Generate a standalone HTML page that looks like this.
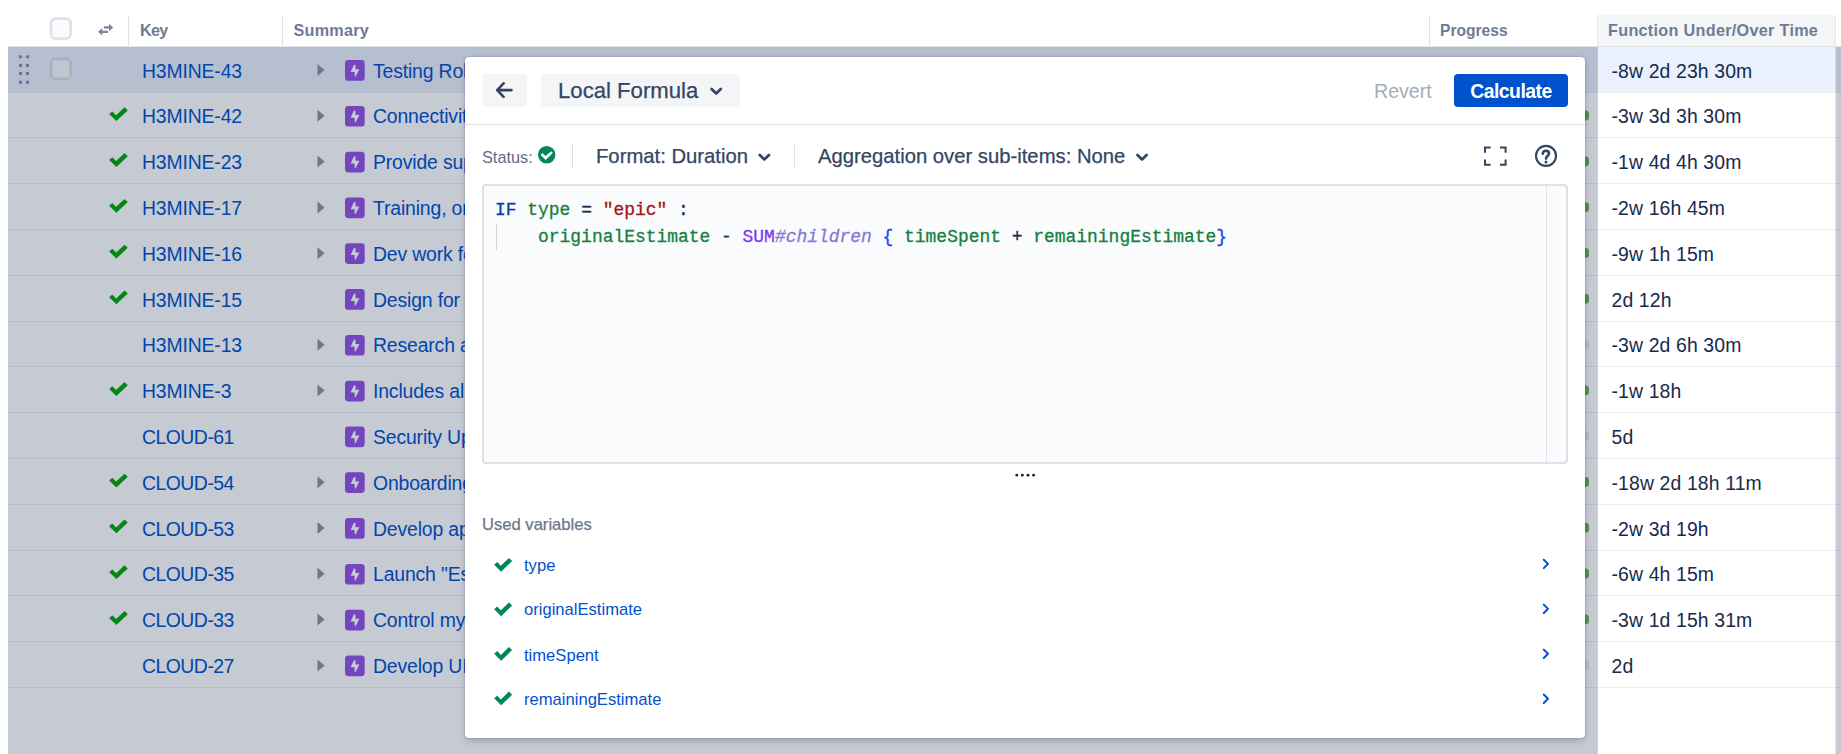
<!DOCTYPE html>
<html lang="en"><head><meta charset="utf-8"><title>Structure - Local Formula</title>
<style>
*{box-sizing:border-box}
html,body{margin:0;padding:0}
body{width:1841px;height:754px;overflow:hidden;background:#fff;position:relative;font-family:"Liberation Sans",sans-serif;color:#172b4d}
.abs{position:absolute}
.layer{position:absolute;left:0;top:0;width:1841px;height:754px;pointer-events:none}
.hd{position:absolute;top:15px;height:31px;line-height:31px;font-weight:bold;font-size:15.6px;color:#6e7b94;white-space:nowrap}
.vsep{position:absolute;top:15px;height:31px;width:1px;background:#dfe1e6}
.row{position:absolute;left:8px;width:1833px;border-bottom:1px solid #ecedf1}
.row.sel{background:#ebf1fc}
.tx{position:absolute;font-size:19.4px;line-height:20px;white-space:nowrap}
.key{left:142px;color:#0052cc;letter-spacing:-0.15px}
.sum{left:373px;color:#0052cc;letter-spacing:-0.15px}
.val{left:1611.5px;color:#172b4d;letter-spacing:0.13px}
.ov{position:absolute;background:rgba(9,30,66,0.235)}
.dlg{position:absolute;left:465px;top:57px;width:1120px;height:681px;background:#fff;border-radius:4px;box-shadow:0 4px 8px -2px rgba(9,30,66,.25),0 0 1px rgba(9,30,66,.31),0 0 3px rgba(9,30,66,.18)}
.btn{position:absolute;top:17px;height:33px;border-radius:4px;background:#f4f5f7}
.t{position:absolute;white-space:nowrap}
.code{position:absolute;left:30px;font-family:"Liberation Mono",monospace;font-size:17.95px;white-space:pre;line-height:27px;-webkit-text-stroke:0.3px}
.var{position:absolute;left:59px;color:#0052cc;font-size:16.6px;line-height:24px;white-space:nowrap}
.kw{color:#0b3ea8}.id{color:#15803d}.op{color:#172b4d}.st{color:#a31515}.fn{color:#7c3aed}.mod{color:#8777d9;font-style:italic}.br{color:#1e40f5}
</style></head><body>

<div class="vsep" style="left:128px"></div>
<div class="vsep" style="left:282px"></div>
<div class="vsep" style="left:1429px"></div>
<div class="hd" style="left:140px;font-size:16.2px;letter-spacing:-0.7px">Key</div>
<div class="hd" style="left:293.5px;font-size:16.2px;letter-spacing:0.25px">Summary</div>
<div class="hd" style="left:1440px">Progress</div>
<div class="abs" style="left:1597px;top:15px;width:239px;height:32px;background:#f4f5f7;border-left:1px solid #e6e7eb;border-right:1px solid #e6e7eb;border-bottom:1px solid #dfe1e6"></div>
<div class="hd" style="left:1608px;font-size:16.2px;letter-spacing:0.3px">Function Under/Over Time</div>
<div class="row sel" style="top:47px;height:46px"></div>
<div class="row" style="top:93px;height:45px"></div>
<div class="row" style="top:138px;height:46px"></div>
<div class="row" style="top:184px;height:46px"></div>
<div class="row" style="top:230px;height:46px"></div>
<div class="row" style="top:276px;height:46px"></div>
<div class="row" style="top:322px;height:45px"></div>
<div class="row" style="top:367px;height:46px"></div>
<div class="row" style="top:413px;height:46px"></div>
<div class="row" style="top:459px;height:46px"></div>
<div class="row" style="top:505px;height:46px"></div>
<div class="row" style="top:551px;height:45px"></div>
<div class="row" style="top:596px;height:46px"></div>
<div class="row" style="top:642px;height:46px"></div>
<span class="tx key" style="top:61px">H3MINE-43</span>
<span class="tx sum" style="top:61px">Testing Rol</span>
<span class="tx val" style="top:61px">-8w 2d 23h 30m</span>
<span class="tx key" style="top:106px">H3MINE-42</span>
<span class="tx sum" style="top:106px">Connectivit</span>
<span class="tx val" style="top:106px">-3w 3d 3h 30m</span>
<span class="tx key" style="top:152px">H3MINE-23</span>
<span class="tx sum" style="top:152px">Provide sup</span>
<span class="tx val" style="top:152px">-1w 4d 4h 30m</span>
<span class="tx key" style="top:198px">H3MINE-17</span>
<span class="tx sum" style="top:198px">Training, on</span>
<span class="tx val" style="top:198px">-2w 16h 45m</span>
<span class="tx key" style="top:244px">H3MINE-16</span>
<span class="tx sum" style="top:244px">Dev work fo</span>
<span class="tx val" style="top:244px">-9w 1h 15m</span>
<span class="tx key" style="top:290px">H3MINE-15</span>
<span class="tx sum" style="top:290px">Design for </span>
<span class="tx val" style="top:290px">2d 12h</span>
<span class="tx key" style="top:335px">H3MINE-13</span>
<span class="tx sum" style="top:335px">Research an</span>
<span class="tx val" style="top:335px">-3w 2d 6h 30m</span>
<span class="tx key" style="top:381px">H3MINE-3</span>
<span class="tx sum" style="top:381px">Includes all</span>
<span class="tx val" style="top:381px">-1w 18h</span>
<span class="tx key" style="top:427px;letter-spacing:-0.5px">CLOUD-61</span>
<span class="tx sum" style="top:427px">Security Up</span>
<span class="tx val" style="top:427px">5d</span>
<span class="tx key" style="top:473px;letter-spacing:-0.5px">CLOUD-54</span>
<span class="tx sum" style="top:473px">Onboarding</span>
<span class="tx val" style="top:473px">-18w 2d 18h 11m</span>
<span class="tx key" style="top:519px;letter-spacing:-0.5px">CLOUD-53</span>
<span class="tx sum" style="top:519px">Develop app</span>
<span class="tx val" style="top:519px">-2w 3d 19h</span>
<span class="tx key" style="top:564px;letter-spacing:-0.5px">CLOUD-35</span>
<span class="tx sum" style="top:564px">Launch &quot;Ess</span>
<span class="tx val" style="top:564px">-6w 4h 15m</span>
<span class="tx key" style="top:610px;letter-spacing:-0.5px">CLOUD-33</span>
<span class="tx sum" style="top:610px">Control my </span>
<span class="tx val" style="top:610px">-3w 1d 15h 31m</span>
<span class="tx key" style="top:656px;letter-spacing:-0.5px">CLOUD-27</span>
<span class="tx sum" style="top:656px">Develop UI</span>
<span class="tx val" style="top:656px">2d</span>
<svg class="layer" width="1841" height="754" viewBox="0 0 1841 754"><rect x="51" y="18.6" width="19.6" height="20" rx="4.6" fill="#fafbfc" stroke="#dfe1e8" stroke-width="2.7"/><rect x="51" y="58.8" width="19.6" height="20" rx="4.6" fill="#fafbfc" stroke="#dcdee5" stroke-width="2.7"/><path transform="translate(98 23)" d="M5.9 3.2H11V0.7L15.2 4.5 11 8.2V5.6H5.9zM9.9 7.7H4.2V5L0.1 8.8 4.2 12.6V10.1H9.9z" fill="#7a869a"/><g fill="#8993a4"><rect x="18.9" y="55.3" width="3.2" height="3"/><rect x="25.9" y="55.3" width="3.2" height="3"/><rect x="18.9" y="64" width="3.2" height="3"/><rect x="25.9" y="64" width="3.2" height="3"/><rect x="18.9" y="72" width="3.2" height="3"/><rect x="25.9" y="72" width="3.2" height="3"/><rect x="18.9" y="80.8" width="3.2" height="3"/><rect x="25.9" y="80.8" width="3.2" height="3"/></g><path d="M317.5 64L324.6 70L317.5 76z" fill="#8993a4"/><g transform="translate(345 60.1)"><rect width="19.7" height="20.7" rx="3.4" fill="#9652e2"/><path d="M10.400 4.500L8.800 4.900 5.600 11.800H9.500L9.800 16.500H10.600L14.400 9.100H10.600z" fill="#fff"/></g><rect x="1579.2" y="64.8" width="9.8" height="9.8" rx="3.4" fill="#ebecf0"/><path transform="translate(108 106)" d="M1.1 8.1L4.3 5.4 8.1 9.2 16.5 1.3 19.8 4.4 8.4 15.1z" fill="#08a706"/><path d="M317.5 109.8L324.6 115.8L317.5 121.8z" fill="#8993a4"/><g transform="translate(345 105.9)"><rect width="19.7" height="20.7" rx="3.4" fill="#9652e2"/><path d="M10.400 4.500L8.800 4.900 5.600 11.800H9.500L9.800 16.500H10.600L14.400 9.100H10.600z" fill="#fff"/></g><rect x="1579.2" y="110.6" width="9.8" height="9.8" rx="3.4" fill="#6db549"/><path transform="translate(108 151.8)" d="M1.1 8.1L4.3 5.4 8.1 9.2 16.5 1.3 19.8 4.4 8.4 15.1z" fill="#08a706"/><path d="M317.5 155.6L324.6 161.6L317.5 167.6z" fill="#8993a4"/><g transform="translate(345 151.7)"><rect width="19.7" height="20.7" rx="3.4" fill="#9652e2"/><path d="M10.400 4.500L8.800 4.900 5.600 11.800H9.500L9.800 16.500H10.600L14.400 9.100H10.600z" fill="#fff"/></g><rect x="1579.2" y="156.4" width="9.8" height="9.8" rx="3.4" fill="#6db549"/><path transform="translate(108 197.6)" d="M1.1 8.1L4.3 5.4 8.1 9.2 16.5 1.3 19.8 4.4 8.4 15.1z" fill="#08a706"/><path d="M317.5 201.4L324.6 207.4L317.5 213.4z" fill="#8993a4"/><g transform="translate(345 197.5)"><rect width="19.7" height="20.7" rx="3.4" fill="#9652e2"/><path d="M10.400 4.500L8.800 4.900 5.600 11.800H9.500L9.800 16.500H10.600L14.400 9.100H10.600z" fill="#fff"/></g><rect x="1579.2" y="202.2" width="9.8" height="9.8" rx="3.4" fill="#6db549"/><path transform="translate(108 243.4)" d="M1.1 8.1L4.3 5.4 8.1 9.2 16.5 1.3 19.8 4.4 8.4 15.1z" fill="#08a706"/><path d="M317.5 247.2L324.6 253.2L317.5 259.2z" fill="#8993a4"/><g transform="translate(345 243.3)"><rect width="19.7" height="20.7" rx="3.4" fill="#9652e2"/><path d="M10.400 4.500L8.800 4.900 5.600 11.800H9.500L9.800 16.500H10.600L14.400 9.100H10.600z" fill="#fff"/></g><rect x="1579.2" y="248" width="9.8" height="9.8" rx="3.4" fill="#6db549"/><path transform="translate(108 289.2)" d="M1.1 8.1L4.3 5.4 8.1 9.2 16.5 1.3 19.8 4.4 8.4 15.1z" fill="#08a706"/><g transform="translate(345 289.1)"><rect width="19.7" height="20.7" rx="3.4" fill="#9652e2"/><path d="M10.400 4.500L8.800 4.900 5.600 11.800H9.500L9.800 16.500H10.600L14.400 9.100H10.600z" fill="#fff"/></g><rect x="1579.2" y="293.8" width="9.8" height="9.8" rx="3.4" fill="#6db549"/><path d="M317.5 338.8L324.6 344.8L317.5 350.8z" fill="#8993a4"/><g transform="translate(345 334.9)"><rect width="19.7" height="20.7" rx="3.4" fill="#9652e2"/><path d="M10.400 4.500L8.800 4.900 5.600 11.800H9.500L9.800 16.500H10.600L14.400 9.100H10.600z" fill="#fff"/></g><rect x="1579.2" y="339.6" width="9.8" height="9.8" rx="3.4" fill="#ebecf0"/><path transform="translate(108 380.8)" d="M1.1 8.1L4.3 5.4 8.1 9.2 16.5 1.3 19.8 4.4 8.4 15.1z" fill="#08a706"/><path d="M317.5 384.6L324.6 390.6L317.5 396.6z" fill="#8993a4"/><g transform="translate(345 380.7)"><rect width="19.7" height="20.7" rx="3.4" fill="#9652e2"/><path d="M10.400 4.500L8.800 4.900 5.600 11.800H9.500L9.800 16.500H10.600L14.400 9.100H10.600z" fill="#fff"/></g><rect x="1579.2" y="385.4" width="9.8" height="9.8" rx="3.4" fill="#6db549"/><g transform="translate(345 426.5)"><rect width="19.7" height="20.7" rx="3.4" fill="#9652e2"/><path d="M10.400 4.500L8.800 4.900 5.600 11.800H9.500L9.800 16.500H10.600L14.400 9.100H10.600z" fill="#fff"/></g><rect x="1579.2" y="431.2" width="9.8" height="9.8" rx="3.4" fill="#ebecf0"/><path transform="translate(108 472.4)" d="M1.1 8.1L4.3 5.4 8.1 9.2 16.5 1.3 19.8 4.4 8.4 15.1z" fill="#08a706"/><path d="M317.5 476.2L324.6 482.2L317.5 488.2z" fill="#8993a4"/><g transform="translate(345 472.3)"><rect width="19.7" height="20.7" rx="3.4" fill="#9652e2"/><path d="M10.400 4.500L8.800 4.900 5.600 11.800H9.500L9.800 16.500H10.600L14.400 9.100H10.600z" fill="#fff"/></g><rect x="1579.2" y="477" width="9.8" height="9.8" rx="3.4" fill="#6db549"/><path transform="translate(108 518.2)" d="M1.1 8.1L4.3 5.4 8.1 9.2 16.5 1.3 19.8 4.4 8.4 15.1z" fill="#08a706"/><path d="M317.5 522L324.6 528L317.5 534z" fill="#8993a4"/><g transform="translate(345 518.1)"><rect width="19.7" height="20.7" rx="3.4" fill="#9652e2"/><path d="M10.400 4.500L8.800 4.900 5.600 11.800H9.500L9.800 16.500H10.600L14.400 9.100H10.600z" fill="#fff"/></g><rect x="1579.2" y="522.8" width="9.8" height="9.8" rx="3.4" fill="#6db549"/><path transform="translate(108 564)" d="M1.1 8.1L4.3 5.4 8.1 9.2 16.5 1.3 19.8 4.4 8.4 15.1z" fill="#08a706"/><path d="M317.5 567.8L324.6 573.8L317.5 579.8z" fill="#8993a4"/><g transform="translate(345 563.9)"><rect width="19.7" height="20.7" rx="3.4" fill="#9652e2"/><path d="M10.400 4.500L8.800 4.900 5.600 11.800H9.500L9.800 16.500H10.600L14.400 9.100H10.600z" fill="#fff"/></g><rect x="1579.2" y="568.6" width="9.8" height="9.8" rx="3.4" fill="#6db549"/><path transform="translate(108 609.8)" d="M1.1 8.1L4.3 5.4 8.1 9.2 16.5 1.3 19.8 4.4 8.4 15.1z" fill="#08a706"/><path d="M317.5 613.6L324.6 619.6L317.5 625.6z" fill="#8993a4"/><g transform="translate(345 609.7)"><rect width="19.7" height="20.7" rx="3.4" fill="#9652e2"/><path d="M10.400 4.500L8.800 4.900 5.600 11.800H9.500L9.800 16.500H10.600L14.400 9.100H10.600z" fill="#fff"/></g><rect x="1579.2" y="614.4" width="9.8" height="9.8" rx="3.4" fill="#6db549"/><path d="M317.5 659.4L324.6 665.4L317.5 671.4z" fill="#8993a4"/><g transform="translate(345 655.5)"><rect width="19.7" height="20.7" rx="3.4" fill="#9652e2"/><path d="M10.400 4.500L8.800 4.900 5.600 11.800H9.500L9.800 16.500H10.600L14.400 9.100H10.600z" fill="#fff"/></g><rect x="1579.2" y="660.2" width="9.8" height="9.8" rx="3.4" fill="#ebecf0"/></svg>
<div class="ov" style="left:8px;top:47px;width:1589px;height:707px"></div>
<div class="ov" style="left:8px;top:46px;width:1589px;height:1px;background:rgba(9,30,66,0.12)"></div>
<div class="ov" style="left:1597px;top:47px;width:1px;height:707px;background:rgba(9,30,66,0.2)"></div>
<div class="ov" style="left:1836px;top:47px;width:5px;height:707px"></div>
<div class="ov" style="left:1836px;top:46px;width:5px;height:1px;background:rgba(9,30,66,0.12)"></div>
<div class="ov" style="left:1835px;top:47px;width:1px;height:707px;background:rgba(9,30,66,0.1)"></div>

<div class="dlg">
  <div class="btn" style="left:17px;width:45px"></div>
  <div class="btn" style="left:76px;width:199px"></div>
  <div class="t" style="left:93px;top:17px;line-height:33px;font-size:22.15px;color:#344563;-webkit-text-stroke:0.25px">Local Formula</div>
  <div class="t" style="left:909px;top:18px;line-height:33px;font-size:19.6px;color:#a5adba">Revert</div>
  <div class="btn" style="left:989px;width:114px;background:#0052cc"></div>
  <div class="t" style="left:989px;width:114px;text-align:center;top:18px;line-height:33px;font-size:19.4px;letter-spacing:-0.5px;font-weight:bold;color:#fff">Calculate</div>
  <div class="abs" style="left:0;top:67px;width:1120px;height:1px;background:#dfe1e6"></div>
  <div class="t" style="left:17px;top:88px;line-height:24px;font-size:16.3px;color:#5e6c84">Status:</div>
  <div class="abs" style="left:107px;top:87px;width:1px;height:24px;background:#dfe1e6"></div>
  <div class="t" style="left:131px;top:86px;line-height:26px;font-size:20.25px;color:#344563;-webkit-text-stroke:0.25px">Format: Duration</div>
  <div class="abs" style="left:329px;top:87px;width:1px;height:24px;background:#dfe1e6"></div>
  <div class="t" style="left:353px;top:86px;line-height:26px;font-size:20.25px;color:#344563;-webkit-text-stroke:0.25px">Aggregation over sub-items: None</div>
  <div class="abs" style="left:17px;top:127px;width:1086px;height:280px;background:#fafbfc;border:2px solid #dfe1e6;border-radius:4px"></div>
  <div class="abs" style="left:1081px;top:129px;width:1px;height:276px;background:#dfe1e6"></div>
  <div class="abs" style="left:31px;top:167px;width:1px;height:26px;background:#d3d5da"></div>
  <div class="code" style="top:140px"><span class="kw">IF</span> <span class="id">type</span> <span class="op">=</span> <span class="st">"epic"</span> <span class="op">:</span></div>
  <div class="code" style="top:167px">    <span class="id">originalEstimate</span> <span class="op">-</span> <span class="fn">SUM</span><span class="mod">#children</span> <span class="br">{</span> <span class="id">timeSpent</span> <span class="op">+</span> <span class="id">remainingEstimate</span><span class="br">}</span></div>
  <div class="t" style="left:17px;top:455.5px;line-height:24px;font-size:16.6px;color:#6b778c;-webkit-text-stroke:0.25px">Used variables</div>
  <div class="var" style="top:497px">type</div>
  <div class="var" style="top:541px">originalEstimate</div>
  <div class="var" style="top:587px">timeSpent</div>
  <div class="var" style="top:631px">remainingEstimate</div>
</div>
<svg class="layer" width="1841" height="754" viewBox="0 0 1841 754"><path d="M511.5 90.1H497.6M503.6 83.3L497.2 90.1 503.6 96.9" fill="none" stroke="#344563" stroke-width="2.6" stroke-linecap="round" stroke-linejoin="round"/><path d="M711.6 89L716.2 93.4L720.8 89" fill="none" stroke="#344563" stroke-width="2.7" stroke-linecap="round" stroke-linejoin="round"/><path d="M759.75 155L764.35 159.4L768.95 155" fill="none" stroke="#344563" stroke-width="2.7" stroke-linecap="round" stroke-linejoin="round"/><path d="M1137.45 155L1142.05 159.4L1146.65 155" fill="none" stroke="#344563" stroke-width="2.7" stroke-linecap="round" stroke-linejoin="round"/><circle cx="546.7" cy="154.7" r="8.75" fill="#00875a"/><path d="M540.7 154.9L542.3 153.1 545.5 155.9 551.3 151.2 552.8 152.9 545.6 160.1z" fill="#fff"/><path d="M1485 152.8V147.4H1490.6M1500 147.4H1505.6V152.8M1505.6 159.400V164.800H1500M1490.6 164.800H1485V159.400" fill="none" stroke="#344563" stroke-width="2"/><g transform="translate(1533.5 143.4)"><circle cx="12.5" cy="12.5" r="10" fill="none" stroke="#344563" stroke-width="2.1"/><path d="M9.3 10.3C9.3 8.4 10.6 7.3 12.4 7.3S15.5 8.4 15.5 10.1C15.5 12.5 12.5 12.7 12.5 15.200" fill="none" stroke="#344563" stroke-width="2.6" stroke-linecap="round"/><circle cx="12.5" cy="18.700" r="1.5" fill="#344563"/></g><g fill="#091e42"><circle cx="1016.7" cy="475.2" r="1.4"/><circle cx="1022.35" cy="475.2" r="1.4"/><circle cx="1027.96" cy="475.2" r="1.4"/><circle cx="1033.6" cy="475.2" r="1.4"/></g><path transform="translate(493.1 556.6) scale(0.96 1)" d="M1.1 8.1L4.3 5.4 8.1 9.2 16.5 1.3 19.8 4.4 8.4 15.1z" fill="#00875a"/><path d="M1543.8 559.7L1548 563.9L1543.8 568.1" fill="none" stroke="#0052cc" stroke-width="2" stroke-linecap="round" stroke-linejoin="round"/><path transform="translate(493.1 601.15) scale(0.96 1)" d="M1.1 8.1L4.3 5.4 8.1 9.2 16.5 1.3 19.8 4.4 8.4 15.1z" fill="#00875a"/><path d="M1543.8 604.65L1548 608.85L1543.8 613.05" fill="none" stroke="#0052cc" stroke-width="2" stroke-linecap="round" stroke-linejoin="round"/><path transform="translate(493.1 645.7) scale(0.96 1)" d="M1.1 8.1L4.3 5.4 8.1 9.2 16.5 1.3 19.8 4.4 8.4 15.1z" fill="#00875a"/><path d="M1543.8 649.6L1548 653.8L1543.8 658" fill="none" stroke="#0052cc" stroke-width="2" stroke-linecap="round" stroke-linejoin="round"/><path transform="translate(493.1 690.25) scale(0.96 1)" d="M1.1 8.1L4.3 5.4 8.1 9.2 16.5 1.3 19.8 4.4 8.4 15.1z" fill="#00875a"/><path d="M1543.8 694.55L1548 698.75L1543.8 702.95" fill="none" stroke="#0052cc" stroke-width="2" stroke-linecap="round" stroke-linejoin="round"/></svg>
</body></html>
